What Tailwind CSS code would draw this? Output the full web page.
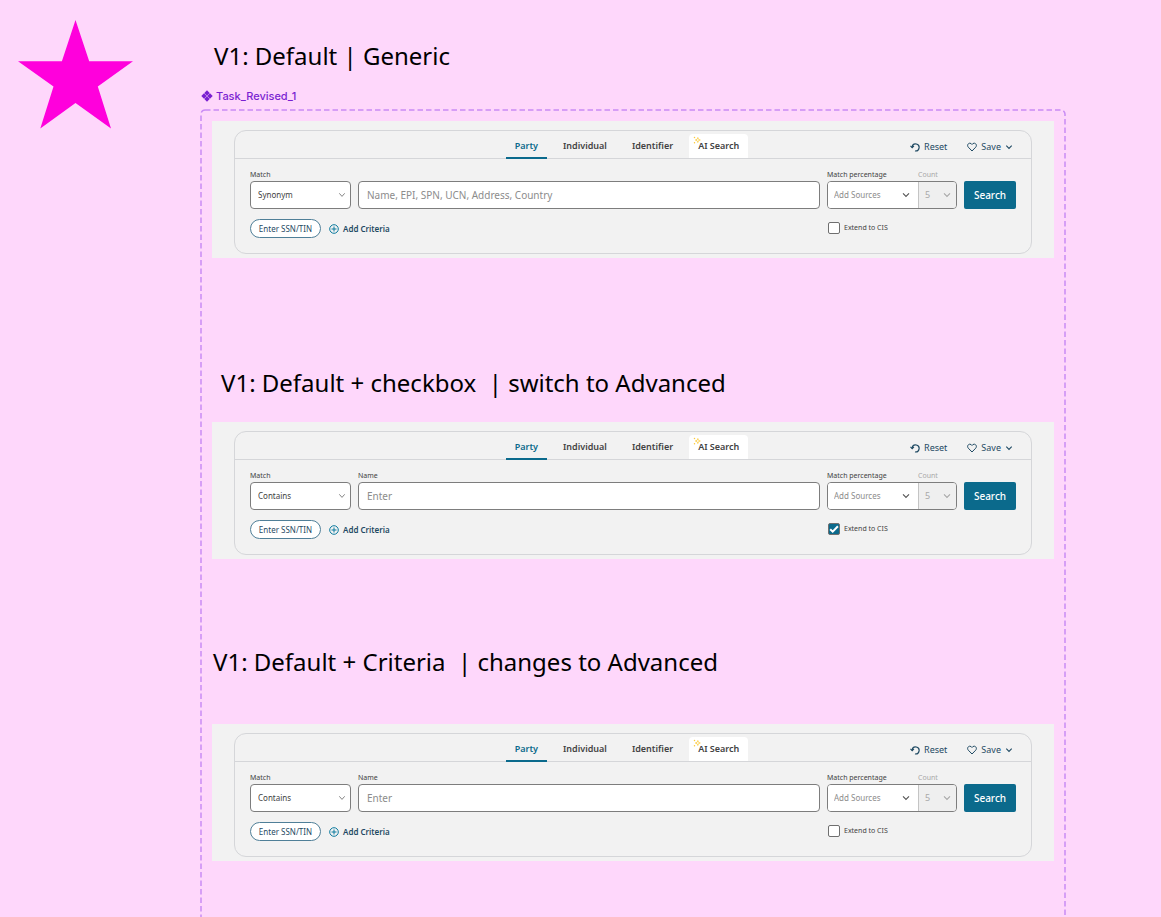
<!DOCTYPE html>
<html lang="en">
<head>
<meta charset="utf-8">
<meta name="viewport" content="width=device-width, initial-scale=1">
<title>Task_Revised_1</title>
<script src="https://cdn.jsdelivr.net/npm/@tailwindcss/browser@4"></script>
</head>
<body class="bg-[#fed7fb] font-['Noto_Sans',sans-serif] text-[#424242]">
<div class="flex min-h-screen overflow-hidden">
  <aside class="w-[200px] shrink-0 pt-5 pl-[18px]">
    <svg class="h-[109px] w-[115px]" viewBox="0 0 115 109" fill="#ff00dc" aria-hidden="true"><path d="M57.500 0 71.200 41.300H115L79.800 66.500 93 108.500 57.500 83 22.300 108.500 35.500 66.500 0 41.300H43.900Z"/></svg>
  </aside>
  <main class="flex min-w-0 flex-1 flex-col pr-[95px]">
    <h1 class="mt-10 ml-3.5 text-2xl leading-8 whitespace-pre text-black">V1: Default | Generic</h1>
    <div class="mt-4 flex h-4 items-center gap-[3px] pl-px font-['Inter',sans-serif] text-[11px] leading-4 font-medium text-[#7a1fd1]">
      <svg class="size-3" viewBox="0 0 12 12" fill="currentColor" aria-hidden="true"><path d="M6 .3 8.700 3 6 5.700 3.300 3ZM6 6.300 8.700 9 6 11.700 3.300 9ZM3 3.300 5.700 6 3 8.700.3 6ZM9 3.300 11.700 6 9 8.700 6.300 6Z"/></svg>
      <span>Task_Revised_1</span>
    </div>
    <section class="relative mt-[5px] flex-1 px-3 pt-3">
      <svg class="pointer-events-none absolute inset-0 size-full" aria-hidden="true"><rect class="h-[110%] w-[calc(100%-2px)]" x="1" y="1" rx="4" fill="none" stroke="#c98cf5" stroke-width="1.500" stroke-dasharray="5.500 3"/></svg>
      <div data-panel="synonym"></div>
      <h2 class="mt-[109px] mb-[23px] ml-[9px] text-2xl leading-8 whitespace-pre text-black">V1: Default + checkbox  | switch to Advanced</h2>
      <div data-panel="checkbox"></div>
      <h2 class="mt-[87px] mb-[46px] ml-px text-2xl leading-8 whitespace-pre text-black">V1: Default + Criteria  | changes to Advanced</h2>
      <div data-panel="criteria"></div>
    </section>
  </main>
</div>

<template id="panel">
  <form class="relative bg-[#f2f2f2] px-[22px] pt-[9px] pb-1">
    <div class="rounded-xl border border-[#d5d6d9]">
      <div class="grid h-7 grid-cols-[1fr_auto_1fr] border-b border-[#d5d6d9]">
        <span></span>
        <nav class="mr-3 flex items-end gap-[7px] text-[9px] leading-6 font-semibold">
          <button type="button" class="-mb-px h-[25px] border-b-2 border-[#0b6a8c] px-[9px] leading-[23px] text-[#0b6a8c]">Party</button>
          <button type="button" class="h-6 px-[9px]">Individual</button>
          <button type="button" class="h-6 px-[9px]">Identifier</button>
          <button type="button" class="relative h-6 rounded-t bg-white px-[9px]">
            <svg class="absolute top-0.5 left-1 size-2" viewBox="0 0 8 8" fill="none" stroke="#fbc52d" stroke-width=".7" stroke-linejoin="round" aria-hidden="true"><path d="M4.800 1.500 5.500 3.300 7.300 4 5.500 4.700 4.800 6.500 4.100 4.700 2.300 4 4.100 3.300ZM1.500.8V2.200M.8 1.500H2.200M1.500 6V7.400M.8 6.700H2.200"/></svg>AI Search</button>
        </nav>
        <div class="flex items-center justify-end gap-5 pt-1 pr-[18px] text-[9px] leading-3 text-[#1f4a63]">
          <button type="button" class="flex items-center gap-1">
            <svg class="size-2.5" viewBox="0 0 10 10" fill="none" stroke="currentColor" stroke-width="1.200" aria-hidden="true"><path d="M2.200 5.600V4.600A3.500 3.500 0 1 1 5 8.900"/><path d="M.5 3.900 2.200 5.600 3.900 3.900"/></svg>Reset</button>
          <button type="button" class="flex items-center gap-1">
            <svg class="size-2.5" viewBox="0 0 10 10" fill="none" stroke="currentColor" stroke-width="1" stroke-linejoin="round" aria-hidden="true"><path d="M5 9 1.300 5.200C-.3 3.200 1.200 1.200 2.800 1.200 3.900 1.200 4.600 1.800 5 2.500 5.400 1.800 6.100 1.200 7.200 1.200 8.800 1.200 10.300 3.200 8.700 5.200Z"/></svg>Save
            <svg class="size-2" viewBox="0 0 8 8" fill="none" stroke="currentColor" stroke-width="1.100" aria-hidden="true"><path d="M1.300 2.600 4 5.400 6.700 2.600"/></svg></button>
        </div>
      </div>
      <div class="grid grid-cols-[101px_1fr_130px_52px] gap-x-[7px] px-[15px] pt-2.5 pb-[15px]">
        <div>
          <label data-for="match" class="block h-3 text-[7px] leading-3">Match</label>
          <div class="relative">
            <select data-id="match" class="block h-7 w-full appearance-none rounded border border-[#7d7d7d] bg-white px-[7px] text-[8px]"><option></option></select>
            <svg class="pointer-events-none absolute top-2.5 right-[5px] size-2" viewBox="0 0 8 8" fill="none" stroke="#777" stroke-width=".9" aria-hidden="true"><path d="M1.300 2.300 4 5.400 6.700 2.300"/></svg>
          </div>
        </div>
        <div>
          <label data-for="query" class="block h-3 text-[7px] leading-3"></label>
          <input data-id="query" type="text" class="block h-7 w-full rounded border border-[#7d7d7d] bg-white px-2 text-[10px] placeholder:text-[#8c8c8c]">
        </div>
        <div>
          <div class="grid h-3 grid-cols-[91px_1fr] text-[7px] leading-3">
            <label data-for="sources">Match percentage</label>
            <label data-for="count" class="text-[#a8a8a8]">Count</label>
          </div>
          <div class="grid h-7 grid-cols-[90px_1fr] grid-rows-[26px] overflow-hidden rounded border border-[#7d7d7d]">
            <div class="relative">
              <select data-id="sources" class="block h-full w-full appearance-none bg-white px-1.5 text-[8px] text-[#8c8c8c]"><option>Add Sources</option></select>
              <svg class="pointer-events-none absolute top-[9px] right-2 size-2" viewBox="0 0 8 8" fill="none" stroke="#555" stroke-width="1.100" aria-hidden="true"><path d="M1 2.300 4 5.400 7 2.300"/></svg>
            </div>
            <div class="relative border-l border-[#c4c4c4]">
              <select data-id="count" disabled class="block h-full w-full appearance-none bg-[#efefef] px-1.5 text-[9px] text-[#a8a8a8] opacity-100"><option>5</option></select>
              <svg class="pointer-events-none absolute top-[9px] right-[5px] size-2" viewBox="0 0 8 8" fill="none" stroke="#a8a8a8" stroke-width="1.100" aria-hidden="true"><path d="M1 2.300 4 5.400 7 2.300"/></svg>
            </div>
          </div>
        </div>
        <button type="submit" class="mt-3 h-7 rounded-xs bg-[#0b6a8c] text-[10px] font-medium text-white">Search</button>
        <div class="col-span-2 mt-2.5 flex items-center gap-2 text-[8px] text-[#1f4a63]">
          <button type="button" class="h-[19px] w-[71px] rounded-full border border-[#4f7f98] bg-white">Enter SSN/TIN</button>
          <button type="button" class="flex items-center gap-1 font-semibold">
            <svg class="size-2.5" viewBox="0 0 10 10" fill="none" stroke="#0b7a9e" aria-hidden="true"><circle cx="5" cy="5" r="4.300"/><path d="M5 2.500V7.500M2.500 5H7.500"/></svg>Add Criteria</button>
        </div>
        <div class="col-span-2 mt-2.5 flex h-[18px] items-center gap-1 pl-px text-[7px]">
          <span class="grid size-3 place-items-center">
            <input data-id="cis" type="checkbox" class="peer col-start-1 row-start-1 size-3 appearance-none rounded-xs border border-[#6f6f6f] bg-white checked:bg-[#0b6a8c]">
            <svg class="pointer-events-none relative col-start-1 row-start-1 hidden size-3 peer-checked:block" viewBox="0 0 12 12" fill="none" stroke="#fff" stroke-width="2" aria-hidden="true"><path d="M2.200 6.300 4.700 8.700 9.900 3.200"/></svg>
          </span>
          <label data-for="cis">Extend to CIS</label>
        </div>
      </div>
    </div>
  </form>
</template>
<script>
const panels = {
  synonym:  { match: "Synonym",  label: "",     hint: "Name, EPI, SPN, UCN, Address, Country", cis: false },
  checkbox: { match: "Contains", label: "Name", hint: "Enter", cis: true },
  criteria: { match: "Contains", label: "Name", hint: "Enter", cis: false },
};
for (const [key, p] of Object.entries(panels)) {
  const node = document.getElementById("panel").content.cloneNode(true);
  node.querySelectorAll("[data-id]").forEach(e => { e.id = key + "-" + e.dataset.id; });
  node.querySelectorAll("[data-for]").forEach(e => { e.htmlFor = key + "-" + e.dataset.for; });
  node.querySelector("[data-id=match] option").textContent = p.match;
  node.querySelector("[data-for=query]").textContent = p.label;
  const query = node.querySelector("[data-id=query]");
  query.placeholder = p.hint;
  if (!p.label) query.setAttribute("aria-label", "Search");
  node.querySelector("[data-id=cis]").checked = p.cis;
  document.querySelector(`[data-panel=${key}]`).append(node);
}
</script>
</body>
</html>
